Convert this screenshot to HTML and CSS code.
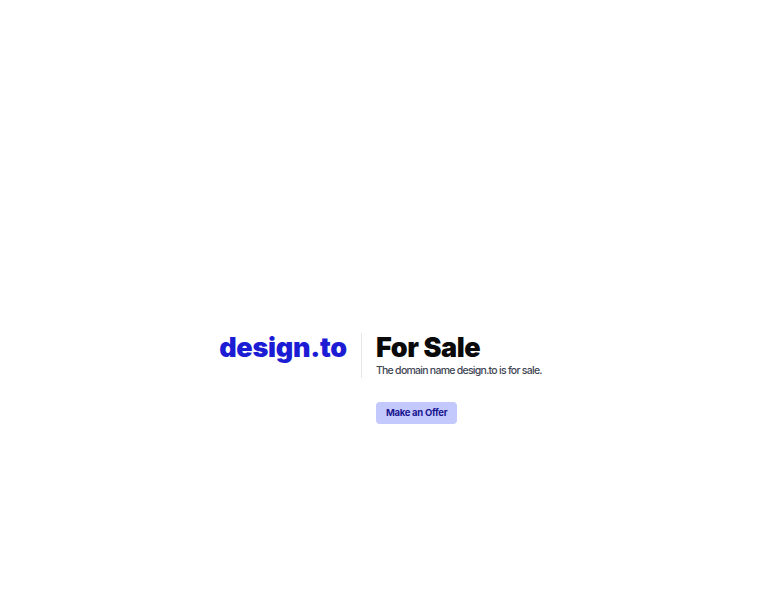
FILE: index.html
```html
<!DOCTYPE html>
<html lang="en">
<head>
<meta charset="utf-8">
<title>design.to is for sale</title>
<link rel="stylesheet" href="styles.css">
</head>
<body>
<main class="page">
  <div class="card">
    <div class="brand">design.to</div>
    <div class="divider"></div>
    <div class="info">
      <h1 class="title">For Sale</h1>
      <p class="desc">The domain name design.to is for sale.</p>
    </div>
    <a class="offer" href="#">Make an Offer</a>
  </div>
</main>
</body>
</html>
```
FILE: styles.css
```css
html, body {
  margin: 0;
  padding: 0;
  background: #ffffff;
}
body {
  font-family: Inter, "Noto Sans", sans-serif;
  color: #111111;
}
.page {
  display: flex;
  justify-content: center;
  padding-top: 333px;
}
.card {
  display: grid;
  grid-template-columns: auto 1px auto;
  column-gap: 14px;
  row-gap: 24px;
  margin-left: 1px;
}
.brand {
  grid-column: 1;
  grid-row: 1;
  font-size: 27px;
  font-weight: 900;
  letter-spacing: -0.01em;
  color: #1c1cd4;
  line-height: 30px;
}
.divider {
  grid-column: 2;
  grid-row: 1;
  background: #e5e7eb;
  width: 1px;
}
.info {
  grid-column: 3;
  grid-row: 1;
}
.title {
  margin: 0;
  font-size: 27px;
  font-weight: 900;
  letter-spacing: -0.015em;
  line-height: 30px;
  color: #0a0a0a;
}
.desc {
  margin: 0;
  font-size: 10.5px;
  font-weight: 500;
  line-height: 15px;
  letter-spacing: -0.07em;
  color: #3f4654;
  white-space: nowrap;
}
.offer {
  grid-column: 3;
  grid-row: 2;
  justify-self: start;
  display: block;
  background: #c3c8fd;
  color: #1a1690;
  font-size: 9.5px;
  font-weight: 700;
  letter-spacing: -0.03em;
  line-height: 22px;
  padding: 0 10px;
  border-radius: 4px;
  text-decoration: none;
}
```
